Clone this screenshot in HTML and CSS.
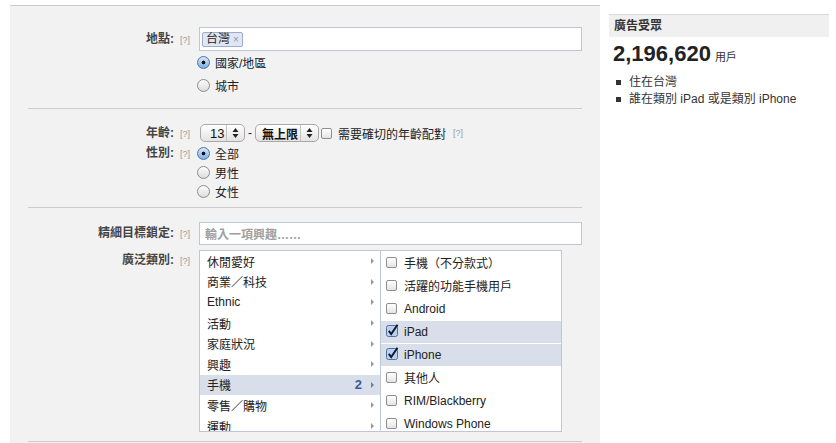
FILE: index.html
```html
<!DOCTYPE html>
<html lang="zh-Hant">
  <head>
    <meta charset="UTF-8" />
    <meta name="viewport" content="width=device-width, initial-scale=1.0" />
    <title>廣告受眾</title>
    <link rel="stylesheet" href="styles.css">
  </head>
  <body>
    <div class="page">
      <div class="form">
        <!-- location -->
        <div class="section s-location">
          <div class="row">
            <div class="label lh24">地點:<span class="help">[?]</span></div>
            <div class="field">
              <div class="input">
                <span class="tag">台灣<span class="x">×</span></span>
              </div>
              <div class="option"><span class="radio on"></span>國家/地區</div>
              <div class="option"><span class="radio"></span>城市</div>
            </div>
          </div>
        </div>

        <!-- age / gender -->
        <div class="section s-people">
          <div class="row age-row">
            <div class="label lh20">年齡:<span class="help">[?]</span></div>
            <div class="field inline">
              <div class="select age">
                <span class="val">13</span>
                <span class="spin"><svg width="7" height="10" viewBox="0 0 7 10"><path d="M3.5 0L6.5 4H0.5Z M3.5 10L6.5 6H0.5Z" fill="#222"/></svg></span>
              </div>
              <span class="dash">-</span>
              <div class="select max">
                <span class="val strong">無上限</span>
                <span class="spin"><svg width="7" height="10" viewBox="0 0 7 10"><path d="M3.5 0L6.5 4H0.5Z M3.5 10L6.5 6H0.5Z" fill="#222"/></svg></span>
              </div>
              <span class="box exact"></span>
              <span class="exact-text">需要確切的年齡配對</span>
              <span class="help">[?]</span>
            </div>
          </div>
          <div class="row">
            <div class="label lh19">性別:<span class="help">[?]</span></div>
            <div class="field">
              <div class="option small"><span class="radio on"></span>全部</div>
              <div class="option small"><span class="radio"></span>男性</div>
              <div class="option small"><span class="radio"></span>女性</div>
            </div>
          </div>
        </div>

        <!-- interests -->
        <div class="section s-interests">
          <div class="row">
            <div class="label lh23">精細目標鎖定:<span class="help">[?]</span></div>
            <div class="field">
              <div class="input interest"><span class="placeholder">輸入一項興趣……</span></div>
            </div>
          </div>
          <div class="row cat-row">
            <div class="label lh21">廣泛類別:<span class="help">[?]</span></div>
            <div class="field">
              <div class="list">
                <div class="cats">
                  <div class="cat">休閒愛好<span class="arrow"></span></div>
                  <div class="cat">商業／科技<span class="arrow"></span></div>
                  <div class="cat">Ethnic<span class="arrow"></span></div>
                  <div class="cat">活動<span class="arrow"></span></div>
                  <div class="cat">家庭狀況<span class="arrow"></span></div>
                  <div class="cat">興趣<span class="arrow"></span></div>
                  <div class="cat active">手機<span class="count">2</span><span class="arrow"></span></div>
                  <div class="cat">零售／購物<span class="arrow"></span></div>
                  <div class="cat">運動<span class="arrow"></span></div>
                </div>
                <div class="opts">
                  <div class="opt"><span class="box"></span>手機（不分款式）</div>
                  <div class="opt"><span class="box"></span>活躍的功能手機用戶</div>
                  <div class="opt"><span class="box"></span>Android</div>
                  <div class="opt checked">
                    <svg class="tick" width="13" height="13" viewBox="0 0 13 13"><rect x="0.5" y="1.5" width="11" height="11" rx="2" fill="#b9d0ef" stroke="#50709e"/><path d="M2.8 6.8L5.2 10L11.5 0.8" stroke="#111a2e" stroke-width="2" fill="none"/></svg>iPad
                  </div>
                  <div class="opt checked">
                    <svg class="tick" width="13" height="13" viewBox="0 0 13 13"><rect x="0.5" y="1.5" width="11" height="11" rx="2" fill="#b9d0ef" stroke="#50709e"/><path d="M2.8 6.8L5.2 10L11.5 0.8" stroke="#111a2e" stroke-width="2" fill="none"/></svg>iPhone
                  </div>
                  <div class="opt"><span class="box"></span>其他人</div>
                  <div class="opt"><span class="box"></span>RIM/Blackberry</div>
                  <div class="opt"><span class="box"></span>Windows Phone</div>
                </div>
              </div>
            </div>
          </div>
        </div>
      </div>

      <div class="audience">
        <div class="audience-head">廣告受眾</div>
        <div class="reach">2,196,620<small>用戶</small></div>
        <ul class="facts">
          <li>住在台灣</li>
          <li>誰在類別 iPad 或是類別 iPhone</li>
        </ul>
      </div>
    </div>
  </body>
</html>
```

FILE: styles.css
```css
body {
  margin: 0;
  background: #fff;
  font-family: "Liberation Sans", "Noto Sans CJK TC", sans-serif;
  font-size: 12px;
  color: #333;
  overflow: hidden;
}

.page {
  display: flex;
  align-items: flex-start;
}

/* left form panel */
.form {
  margin: 5px 0 0 10px;
  width: 590px;
  height: 437px;
  background: #f2f2f2;
  border-top: 1px solid #ccc;
}

.section {
  margin: 0 18px;
  border-bottom: 1px solid #ccc;
}

.s-location {
  padding: 21px 0 11px;
}

.s-people {
  padding: 14px 0 6px;
}

.s-interests {
  padding: 14px 0 9px;
}

.row {
  display: flex;
  align-items: flex-start;
}

.label {
  width: 162px;
  margin-right: 9px;
  text-align: right;
  font-weight: bold;
  color: #444;
  white-space: nowrap;
}

.lh24 { line-height: 24px; }
.lh23 { line-height: 23px; }
.lh21 { line-height: 21px; }
.lh20 { line-height: 20px; }
.lh19 { line-height: 19px; }

.help {
  font-size: 9px;
  font-weight: normal;
  color: #9a9a9a;
  margin-left: 6px;
}

.field {
  flex: 1;
}

.input {
  box-sizing: border-box;
  height: 24px;
  border: 1px solid #bdc7d8;
  background: #fff;
  display: flex;
  align-items: center;
  padding: 0 2px;
}

.input.interest {
  height: 23px;
  padding: 0 5px;
}

.placeholder {
  color: #a0a0a0;
  font-weight: bold;
}

.tag {
  height: 13px;
  line-height: 13px;
  padding: 0 3px;
  background: #e2e6f0;
  border: 1px solid #9dacce;
  border-radius: 2px;
  color: #222;
}

.tag .x {
  font-size: 10px;
  color: #8a98b8;
  margin-left: 3px;
}

.option {
  display: flex;
  align-items: center;
  height: 23px;
  gap: 5px;
  color: #222;
}

.option.small {
  height: 19px;
}

.radio {
  box-sizing: border-box;
  width: 13px;
  height: 13px;
  margin-left: -2px;
  border-radius: 50%;
  border: 1px solid #8c8c8c;
  background: linear-gradient(#fdfdfd, #dcdcdc);
}

.radio.on {
  border-color: #4f73a8;
  background: radial-gradient(circle, #111 0 1.6px, transparent 2.2px),
    linear-gradient(#d7e7fa, #79aee8);
}

/* age row */
.inline {
  display: flex;
  align-items: center;
  height: 20px;
}

.select {
  box-sizing: border-box;
  display: flex;
  align-items: center;
  justify-content: space-between;
  height: 18px;
  border: 1px solid #a9a9a9;
  border-radius: 5px;
  background: linear-gradient(#ffffff, #e3e3e3);
  font-size: 13px;
  color: #111;
  white-space: nowrap;
  flex: none;
}

.select.age {
  width: 45px;
  margin-left: 1px;
}

.select.max {
  width: 64px;
}

.select .val {
  padding-left: 9px;
}

.select .strong {
  font-size: 12px;
  font-weight: bold;
  padding-left: 6px;
}

.select .spin {
  display: flex;
  align-items: center;
  height: 100%;
  padding: 0 5px;
  border-left: 1px solid #c4c4c4;
}

.dash {
  margin: 0 3px;
  color: #222;
}

.box {
  box-sizing: border-box;
  width: 11px;
  height: 11px;
  border: 1px solid #8e8e8e;
  border-radius: 2px;
  background: linear-gradient(#ffffff, #e4e4e4);
  flex: none;
}

.box.exact {
  margin-left: 2px;
}

.exact-text {
  margin-left: 6px;
  color: #222;
  white-space: nowrap;
}

.inline .help {
  margin-left: 7px;
}

/* interests list */
.cat-row {
  margin-top: 4px;
}

.list {
  display: flex;
  width: 361px;
  height: 180px;
  border: 1px solid #bdc7d8;
  background: #fff;
  overflow: hidden;
}

.cats {
  width: 180px;
  border-right: 1px solid #bdc7d8;
  flex: none;
}

.cat {
  display: flex;
  align-items: center;
  height: 20.6px;
  padding: 0 6px 0 7px;
  color: #222;
}

.cat.active {
  background: #d8dfea;
}

.count {
  margin-left: auto;
  font-size: 13px;
  font-weight: bold;
  color: #3b5998;
}

.arrow {
  margin-left: auto;
  width: 0;
  height: 0;
  border-left: 3px solid #999;
  border-top: 3px solid transparent;
  border-bottom: 3px solid transparent;
}

.count + .arrow {
  margin-left: 9px;
}

.active .arrow {
  border-left-color: #6d7f9f;
}

.opts {
  flex: 1;
}

.opt {
  display: flex;
  align-items: center;
  gap: 7px;
  height: 23px;
  padding-left: 5px;
  color: #222;
}

.opt.checked {
  background: #d8dfea;
  box-shadow: inset 0 1px #fff;
}

.tick {
  margin: -2px -2px 0 0;
}

/* right column */
.audience {
  width: 220px;
  margin: 14px 0 0 9px;
}

.audience-head {
  height: 22px;
  line-height: 22px;
  padding-left: 5px;
  border-top: 1px solid #dcdcdc;
  background: #f0f0f0;
  font-weight: bold;
  color: #333;
}

.reach {
  margin-top: 4px;
  padding-left: 4px;
  font-size: 22px;
  line-height: 26px;
  font-weight: bold;
  color: #222;
}

.reach small {
  font-size: 11px;
  font-weight: normal;
  margin-left: 4px;
  color: #333;
}

.facts {
  list-style: none;
  margin: 4px 0 0;
  padding: 0;
  line-height: 17px;
  color: #333;
}

.facts li {
  display: flex;
  align-items: center;
}

.facts li::before {
  content: "";
  width: 5px;
  height: 5px;
  background: #333;
  margin: 0 8px 0 7px;
}
```
